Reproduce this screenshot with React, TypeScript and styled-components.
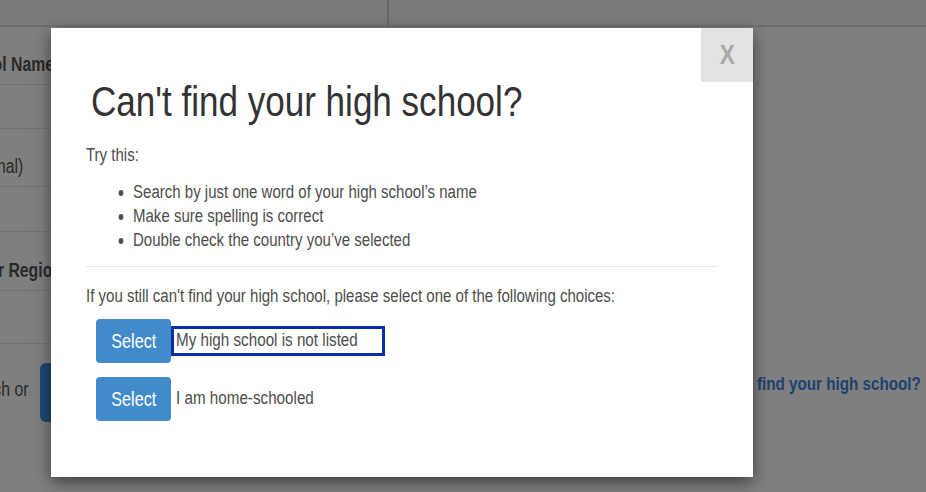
import React from "react";
import styled, { createGlobalStyle, css } from "styled-components";

const GlobalStyle = createGlobalStyle`
  html, body, #root {
    margin: 0;
    height: 100%;
  }
  body {
    font-family: "Liberation Sans", Arial, sans-serif;
    background: #fff;
    color: #555;
  }
`;

// the page uses a condensed Arial; no narrow face is installed, so squeeze Arial
const narrow = (origin = "0 50%") => css`
  display: inline-block;
  white-space: nowrap;
  transform: scaleX(0.81);
  transform-origin: ${origin};
`;

const Narrow = styled.span<{ $origin?: string }>`
  ${(p) => narrow(p.$origin)}
`;

const Page = styled.div`
  position: relative;
  width: 100%;
  height: 100vh;
  overflow: hidden;
  background: #fff;
`;

// the page behind the dialog is scrolled a little to the left
const PageInner = styled.div`
  margin-left: -40px;
`;

const TopBand = styled.div`
  display: flex;
  height: 25px;
  background: #f7f7f7;
  border-bottom: 2px solid #dedede;
`;

const TopCell = styled.div`
  width: 427px;
  border-right: 2px solid #d0d0d0;
`;

const Form = styled.div`
  width: 427px;
  margin-left: -6px;
`;

const Row = styled.div<{ $h: number }>`
  height: ${(p) => p.$h}px;
  display: flex;
  align-items: flex-end;
  padding-bottom: 8px;
  box-sizing: border-box;
  border-bottom: 1px solid #e4e4e4;
`;

const Label = styled.span<{ $bold?: boolean }>`
  ${narrow()}
  font-size: 19.5px;
  line-height: 24px;
  color: #555;
  font-weight: ${(p) => (p.$bold ? 700 : 400)};
`;

const BottomRow = styled.div`
  display: flex;
  align-items: flex-start;
  justify-content: space-between;
  margin-top: 19px;
  padding-right: 5px;
  width: 966px;
  box-sizing: border-box;
`;

const SearchGroup = styled.div`
  display: flex;
  align-items: flex-start;
  gap: 14px;
`;

const SearchText = styled.div`
  width: 66px;
  margin-top: 14px;
`;

const AddButton = styled.div`
  width: 170px;
  height: 59px;
  border-radius: 6px;
  background: #3b93e6;
`;

const Link = styled.span`
  ${narrow("100% 50%")}
  margin-top: 9px;
  font-size: 18.8px;
  line-height: 24px;
  font-weight: 700;
  color: #3f84de;
`;

const Backdrop = styled.div`
  position: absolute;
  inset: 0;
  background: rgba(0, 0, 0, 0.5);
`;

const Modal = styled.div`
  position: absolute;
  left: 51px;
  top: 28px;
  width: 702px;
  height: 449px;
  box-sizing: border-box;
  padding: 0 35px;
  background: #fff;
  box-shadow: 0 5px 15px rgba(0, 0, 0, 0.5);
`;

const Close = styled.div`
  position: absolute;
  top: 0;
  right: 0;
  width: 52px;
  height: 54px;
  display: flex;
  align-items: center;
  justify-content: center;
  background: #e3e3e3;
  color: #a8a8a8;
  font-size: 28px;
  font-weight: 700;
`;

const Title = styled.h1`
  margin: 48px 0 0 5px;
  font-size: 43px;
  line-height: 50px;
  font-weight: 400;
  color: #333;
  white-space: nowrap;
  transform: scaleX(0.815);
  transform-origin: 0 50%;
`;

const Text = styled.p`
  margin: 17px 0 0;
  font-size: 18.8px;
  line-height: 24px;
  color: #4d4d4d;
  white-space: nowrap;
  transform: scaleX(0.8);
  transform-origin: 0 50%;
`;

const Tips = styled.ul`
  margin: 13px 0 0;
  padding-left: 47px;
  font-size: 18.8px;
  line-height: 24px;
  color: #4d4d4d;
`;

const Tip = styled.li`
  white-space: nowrap;
  transform: scaleX(0.8);
  transform-origin: 0 50%;
`;

const Divider = styled.hr`
  margin: 14px 0 0;
  border: 0;
  border-top: 1px solid #e8e8e8;
`;

const Choices = styled.div`
  display: flex;
  flex-direction: column;
  gap: 14px;
  margin: 11px 0 0 10px;
`;

const Choice = styled.div`
  display: flex;
  align-items: center;
`;

const SelectButton = styled.button`
  width: 75px;
  height: 44px;
  border: 0;
  border-radius: 4px;
  background: #428bca;
  color: #fff;
  font-family: inherit;
  font-size: 20px;
  padding: 0;
`;

const ChoiceLabel = styled.span<{ $focused?: boolean }>`
  box-sizing: border-box;
  width: 214px;
  height: 30px;
  display: flex;
  align-items: center;
  padding: 0 0 2px 2px;
  border: 3px solid ${(p) => (p.$focused ? "#0a2ea6" : "transparent")};
  font-size: 18.8px;
  color: #4d4d4d;
`;

const tips = [
  "Search by just one word of your high school\u2019s name",
  "Make sure spelling is correct",
  "Double check the country you\u2019ve selected",
];

export default function App() {
  return (
    <>
      <GlobalStyle />
      <Page>
        <PageInner>
          <TopBand>
            <TopCell />
          </TopBand>
          <Form>
            <Row $h={58}>
              <Label $bold>School Name</Label>
            </Row>
            <Row $h={44} />
            <Row $h={58}>
              <Label>(Optional)</Label>
            </Row>
            <Row $h={45} />
            <Row $h={59}>
              <Label $bold>City or Region</Label>
            </Row>
            <Row $h={53} />
          </Form>
          <BottomRow>
            <SearchGroup>
              <SearchText>
                <Label>Search or</Label>
              </SearchText>
              <AddButton />
            </SearchGroup>
            <Link>Can't find your high school?</Link>
          </BottomRow>
        </PageInner>
        <Backdrop />
        <Modal>
          <Close>
            <Narrow $origin="50% 50%">X</Narrow>
          </Close>
          <Title>Can't find your high school?</Title>
          <Text>Try this:</Text>
          <Tips>
            {tips.map((t) => (
              <Tip key={t}>{t}</Tip>
            ))}
          </Tips>
          <Divider />
          <Text>If you still can't find your high school, please select one of the following choices:</Text>
          <Choices>
            <Choice>
              <SelectButton>
                <Narrow $origin="50% 50%">Select</Narrow>
              </SelectButton>
              <ChoiceLabel $focused>
                <Narrow>My high school is not listed</Narrow>
              </ChoiceLabel>
            </Choice>
            <Choice>
              <SelectButton>
                <Narrow $origin="50% 50%">Select</Narrow>
              </SelectButton>
              <ChoiceLabel>
                <Narrow>I am home-schooled</Narrow>
              </ChoiceLabel>
            </Choice>
          </Choices>
        </Modal>
      </Page>
    </>
  );
}
